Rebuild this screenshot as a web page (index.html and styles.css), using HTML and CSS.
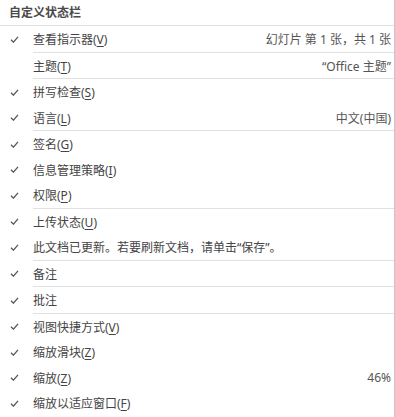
FILE: index.html
```html
<!DOCTYPE html>
<html lang="zh-CN">
<head>
    <meta charset="UTF-8">
    <meta name="viewport" content="width=device-width, initial-scale=1.0">
    <title>自定义状态栏</title>
    <link rel="stylesheet" href="styles.css">
</head>
<body>
    <div class="menu">
        <div class="menu-title">自定义状态栏</div>

        <div class="item sep">
            <span class="check"><svg viewBox="0 0 10 8"><path d="M1 4.2 L3.8 7 L9 1"/></svg></span>
            <span class="label">查看指示器(<u>V</u>)</span>
            <span class="value">幻灯片 第 1 张，共 1 张</span>
        </div>
        <div class="item sep">
            <span class="check"></span>
            <span class="label">主题(<u>T</u>)</span>
            <span class="value">“Office 主题”</span>
        </div>
        <div class="item">
            <span class="check"><svg viewBox="0 0 10 8"><path d="M1 4.2 L3.8 7 L9 1"/></svg></span>
            <span class="label">拼写检查(<u>S</u>)</span>
        </div>
        <div class="item sep">
            <span class="check"><svg viewBox="0 0 10 8"><path d="M1 4.2 L3.8 7 L9 1"/></svg></span>
            <span class="label">语言(<u>L</u>)</span>
            <span class="value">中文(中国)</span>
        </div>
        <div class="item">
            <span class="check"><svg viewBox="0 0 10 8"><path d="M1 4.2 L3.8 7 L9 1"/></svg></span>
            <span class="label">签名(<u>G</u>)</span>
        </div>
        <div class="item">
            <span class="check"><svg viewBox="0 0 10 8"><path d="M1 4.2 L3.8 7 L9 1"/></svg></span>
            <span class="label">信息管理策略(<u>I</u>)</span>
        </div>
        <div class="item sep">
            <span class="check"><svg viewBox="0 0 10 8"><path d="M1 4.2 L3.8 7 L9 1"/></svg></span>
            <span class="label">权限(<u>P</u>)</span>
        </div>
        <div class="item">
            <span class="check"><svg viewBox="0 0 10 8"><path d="M1 4.2 L3.8 7 L9 1"/></svg></span>
            <span class="label">上传状态(<u>U</u>)</span>
        </div>
        <div class="item sep">
            <span class="check"><svg viewBox="0 0 10 8"><path d="M1 4.2 L3.8 7 L9 1"/></svg></span>
            <span class="label">此文档已更新。若要刷新文档，请单击“保存”。</span>
        </div>
        <div class="item sep">
            <span class="check"><svg viewBox="0 0 10 8"><path d="M1 4.2 L3.8 7 L9 1"/></svg></span>
            <span class="label">备注</span>
        </div>
        <div class="item sep">
            <span class="check"><svg viewBox="0 0 10 8"><path d="M1 4.2 L3.8 7 L9 1"/></svg></span>
            <span class="label">批注</span>
        </div>
        <div class="item">
            <span class="check"><svg viewBox="0 0 10 8"><path d="M1 4.2 L3.8 7 L9 1"/></svg></span>
            <span class="label">视图快捷方式(<u>V</u>)</span>
        </div>
        <div class="item">
            <span class="check"><svg viewBox="0 0 10 8"><path d="M1 4.2 L3.8 7 L9 1"/></svg></span>
            <span class="label">缩放滑块(<u>Z</u>)</span>
        </div>
        <div class="item">
            <span class="check"><svg viewBox="0 0 10 8"><path d="M1 4.2 L3.8 7 L9 1"/></svg></span>
            <span class="label">缩放(<u>Z</u>)</span>
            <span class="value">46%</span>
        </div>
        <div class="item">
            <span class="check"><svg viewBox="0 0 10 8"><path d="M1 4.2 L3.8 7 L9 1"/></svg></span>
            <span class="label">缩放以适应窗口(<u>F</u>)</span>
        </div>
    </div>
</body>
</html>
```

FILE: styles.css
```css
body {
    margin: 0;
    padding: 0;
    background-color: #fff;
    font-family: "Noto Sans", "Noto Sans CJK SC", sans-serif;
    font-size: 12px;
    color: #444;
}

.menu {
    width: 395px;
    border-right: 1px solid #c6c6c6;
    min-height: 417px;
    box-sizing: border-box;
}

.menu-title {
    height: 25px;
    line-height: 26px;
    padding-left: 9px;
    font-weight: 600;
    color: #4a4a4a;
    border-bottom: 1px solid #e1e1e1;
}

.item {
    display: flex;
    align-items: center;
    height: 25.5px;
    padding-top: 1px;
    box-sizing: border-box;
    padding-right: 3px;
    position: relative;
}

.item.sep::after {
    content: "";
    position: absolute;
    left: 33px;
    right: 0;
    bottom: -1px;
    height: 1px;
    background-color: #e1e1e1;
}

.item.sep {
    margin-bottom: 1px;
}

.check {
    width: 33px;
    flex-shrink: 0;
    display: flex;
    align-items: center;
    padding-left: 10px;
    box-sizing: border-box;
}

.check svg {
    width: 9px;
    height: 7px;
    fill: none;
    stroke: #555;
    stroke-width: 1.5;
}

.label {
    flex: 1;
    white-space: nowrap;
}

.label u {
    text-underline-offset: 2px;
}

.value {
    color: #555;
    white-space: nowrap;
}
```
